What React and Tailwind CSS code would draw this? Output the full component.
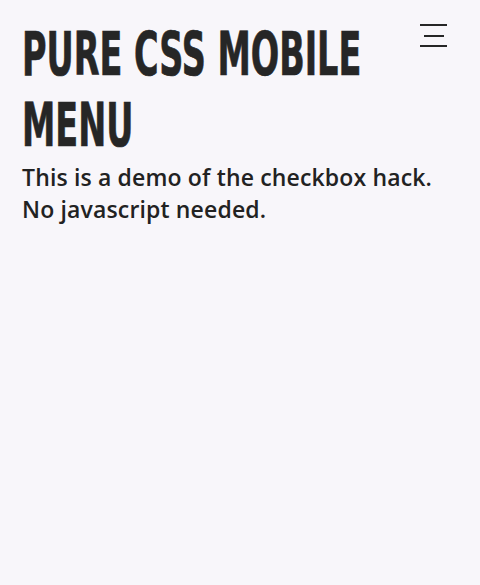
import React from 'react';

const App = () => {
    return (
        <div className="min-h-[585px] w-[480px] bg-[#f8f6fa] relative overflow-hidden">
            {/* Hamburger toggle */}
            <button className="absolute top-[24px] left-[420px] w-[27px] h-[23px] flex flex-col items-center justify-between">
                <span className="block w-[27px] h-[2px] bg-[#262626]"></span>
                <span className="block w-[20px] h-[2px] bg-[#262626]"></span>
                <span className="block w-[27px] h-[2px] bg-[#262626]"></span>
            </button>

            <main className="pt-[19px] pl-[22px]">
                <h1
                    className="text-[60px] leading-[71px] font-bold text-[#262626] uppercase origin-left scale-x-[0.62] whitespace-nowrap [-webkit-text-stroke:0.7px_#262626]"
                    style={{ fontFamily: '"DejaVu Sans Condensed", sans-serif' }}
                >
                    Pure CSS Mobile<br />Menu
                </h1>
                <p
                    className="text-[23px] leading-[32px] tracking-[0.15px] font-semibold text-[#222]"
                    style={{ fontFamily: '"Open Sans", sans-serif' }}
                >
                    This is a demo of the checkbox hack.<br />No javascript needed.
                </p>
            </main>
        </div>
    );
};

export default App;
